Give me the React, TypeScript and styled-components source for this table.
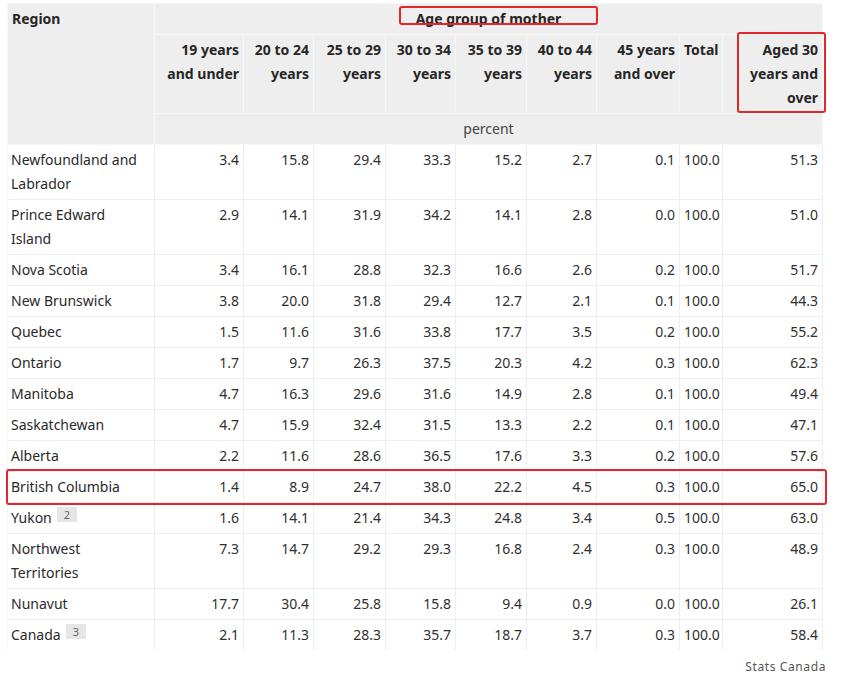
import React from 'react';
import styled, { createGlobalStyle } from 'styled-components';

const GlobalStyle = createGlobalStyle`
    body {
        margin: 0;
        background: #ffffff;
        font-family: 'Noto Sans', 'Open Sans', sans-serif;
        color: #333333;
    }
`;

const Page = styled.div`
    position: relative;
    width: 841px;
    height: 684px;
    padding: 3px 0 0 7px;
    box-sizing: border-box;
`;

const Table = styled.table`
    width: 815px;
    table-layout: fixed;
    border-collapse: collapse;
    font-size: 14px;
    line-height: 24px;

    tbody tr:last-child td {
        border-bottom: none;
    }
`;

const HeadCell = styled.th<{ align?: string }>`
    background: #eeeeee;
    border: 1px solid #f7f7f7;
    padding: 3px 4px;
    font-weight: 700;
    color: #262626;
    text-align: ${(props) => props.align || 'right'};
    vertical-align: top;
`;

const UnitCell = styled.th`
    background: #eeeeee;
    border: 1px solid #f7f7f7;
    padding: 3px 4px;
    font-weight: 400;
    color: #444444;
    text-align: center;
`;

const RegionCell = styled.td`
    border: 1px solid #eceef2;
    border-left-color: #f6f7f9;
    padding: 3px 8px 3px 3px;
    text-align: left;
    vertical-align: top;
    color: #2a2a2a;
`;

const NumCell = styled.td<{ align?: string }>`
    border: 1px solid #eceef2;
    padding: 3px 4px;
    text-align: ${(props) => props.align || 'right'};
    vertical-align: top;
    white-space: nowrap;
    color: #2f2f2f;
`;

const Note = styled.sup`
    display: inline-block;
    margin-left: 5px;
    padding: 0 7px;
    background: #e6e6e6;
    color: #666666;
    font-size: 11px;
    line-height: 15px;
    vertical-align: top;
    margin-top: 1px;
`;

const Source = styled.div`
    display: flex;
    justify-content: flex-end;
    padding: 8px 15px 0 0;
    font-size: 12px;
    letter-spacing: 0.6px;
    color: #555555;
`;

const Mark = styled.div`
    position: absolute;
    box-sizing: border-box;
    border: 2px solid #e3262b;
    border-radius: 3px;
    pointer-events: none;
`;

const widths = [147, 89, 70, 72, 70, 71, 70, 83, 43, 100];

const ageHeads = [
    '19 years and under',
    '20 to 24 years',
    '25 to 29 years',
    '30 to 34 years',
    '35 to 39 years',
    '40 to 44 years',
    '45 years and over',
    'Total',
    'Aged 30 years and over',
];

const rows: { region: string; note?: string; values: string[] }[] = [
    { region: 'Newfoundland and Labrador', values: ['3.4', '15.8', '29.4', '33.3', '15.2', '2.7', '0.1', '100.0', '51.3'] },
    { region: 'Prince Edward Island', values: ['2.9', '14.1', '31.9', '34.2', '14.1', '2.8', '0.0', '100.0', '51.0'] },
    { region: 'Nova Scotia', values: ['3.4', '16.1', '28.8', '32.3', '16.6', '2.6', '0.2', '100.0', '51.7'] },
    { region: 'New Brunswick', values: ['3.8', '20.0', '31.8', '29.4', '12.7', '2.1', '0.1', '100.0', '44.3'] },
    { region: 'Quebec', values: ['1.5', '11.6', '31.6', '33.8', '17.7', '3.5', '0.2', '100.0', '55.2'] },
    { region: 'Ontario', values: ['1.7', '9.7', '26.3', '37.5', '20.3', '4.2', '0.3', '100.0', '62.3'] },
    { region: 'Manitoba', values: ['4.7', '16.3', '29.6', '31.6', '14.9', '2.8', '0.1', '100.0', '49.4'] },
    { region: 'Saskatchewan', values: ['4.7', '15.9', '32.4', '31.5', '13.3', '2.2', '0.1', '100.0', '47.1'] },
    { region: 'Alberta', values: ['2.2', '11.6', '28.6', '36.5', '17.6', '3.3', '0.2', '100.0', '57.6'] },
    { region: 'British Columbia', values: ['1.4', '8.9', '24.7', '38.0', '22.2', '4.5', '0.3', '100.0', '65.0'] },
    { region: 'Yukon', note: '2', values: ['1.6', '14.1', '21.4', '34.3', '24.8', '3.4', '0.5', '100.0', '63.0'] },
    { region: 'Northwest Territories', values: ['7.3', '14.7', '29.2', '29.3', '16.8', '2.4', '0.3', '100.0', '48.9'] },
    { region: 'Nunavut', values: ['17.7', '30.4', '25.8', '15.8', '9.4', '0.9', '0.0', '100.0', '26.1'] },
    { region: 'Canada', note: '3', values: ['2.1', '11.3', '28.3', '35.7', '18.7', '3.7', '0.3', '100.0', '58.4'] },
];

export default function App() {
    return (
        <Page>
            <GlobalStyle />
            <Table>
                <colgroup>
                    {widths.map((w, i) => (
                        <col key={i} style={{ width: w }} />
                    ))}
                </colgroup>
                <thead>
                    <tr>
                        <HeadCell align="left" rowSpan={3}>
                            Region
                        </HeadCell>
                        <HeadCell align="center" colSpan={9}>
                            Age group of mother
                        </HeadCell>
                    </tr>
                    <tr>
                        {ageHeads.map((head) => (
                            <HeadCell key={head} align={head === 'Total' ? 'left' : 'right'}>
                                {head}
                            </HeadCell>
                        ))}
                    </tr>
                    <tr>
                        <UnitCell colSpan={9}>percent</UnitCell>
                    </tr>
                </thead>
                <tbody>
                    {rows.map((row) => (
                        <tr key={row.region}>
                            <RegionCell>
                                {row.region}
                                {row.note && <Note>{row.note}</Note>}
                            </RegionCell>
                            {row.values.map((value, i) => (
                                <NumCell key={i} align={i === 7 ? 'left' : 'right'}>
                                    {value}
                                </NumCell>
                            ))}
                        </tr>
                    ))}
                </tbody>
            </Table>
            <Source>Stats Canada</Source>
            <Mark style={{ left: 399, top: 6, width: 199, height: 19 }} />
            <Mark style={{ left: 737, top: 32, width: 89, height: 81 }} />
            <Mark style={{ left: 6, top: 469, width: 821, height: 36 }} />
        </Page>
    );
}
